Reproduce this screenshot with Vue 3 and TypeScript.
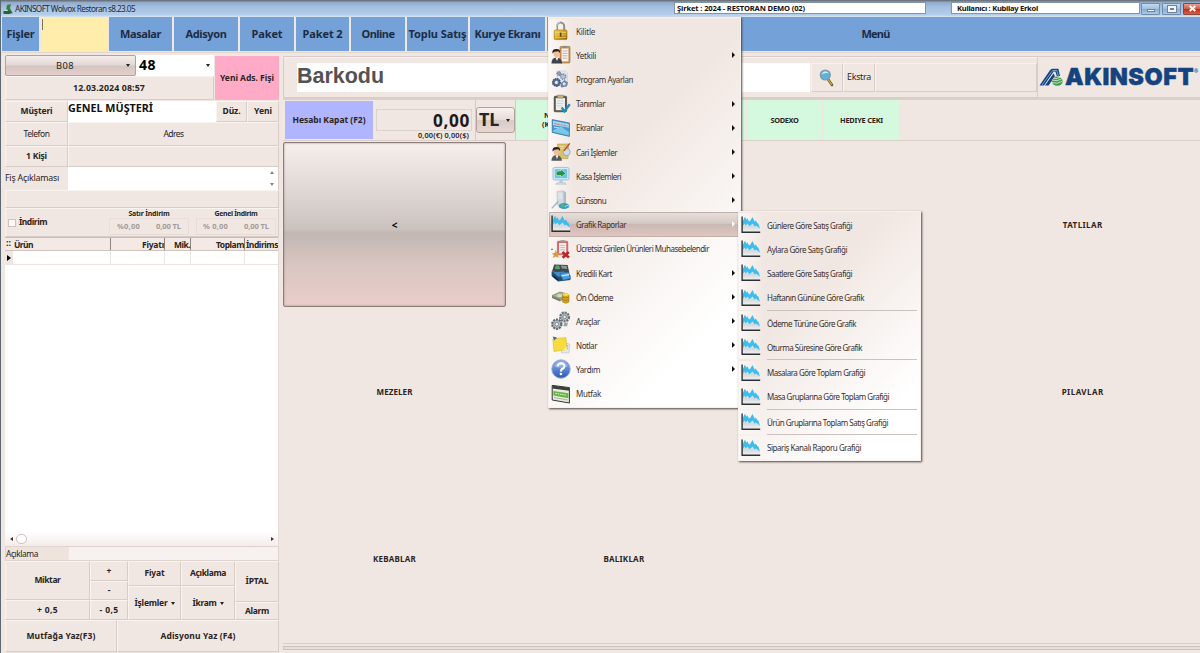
<script setup lang="ts">
interface MenuEntry {
  icon: string
  label: string
  width: number
  arrow?: boolean
  active?: boolean
}
interface ReportEntry {
  label: string
  width: number
  separator?: boolean
}

const navItems: { label: string; width: number; cls: string }[] = [
  { label: 'Fişler', width: 28, cls: 'n-fisler' },
  { label: '', width: 0, cls: 'n-input' },
  { label: 'Masalar', width: 41, cls: 'n-masalar' },
  { label: 'Adisyon', width: 41, cls: 'n-adisyon' },
  { label: 'Paket', width: 31, cls: 'n-paket' },
  { label: 'Paket 2', width: 40, cls: 'n-paket2' },
  { label: 'Online', width: 33, cls: 'n-online' },
  { label: 'Toplu Satış', width: 58, cls: 'n-toplu' },
  { label: 'Kurye Ekranı', width: 66, cls: 'n-kurye' },
  { label: 'Menü', width: 28, cls: 'n-menu' },
]

const menuItems: MenuEntry[] = [
  { icon: 'lock', label: 'Kilitle', width: 19 },
  { icon: 'user', label: 'Yetkili', width: 20, arrow: true },
  { icon: 'cogs', label: 'Program Ayarları', width: 57 },
  { icon: 'clip', label: 'Tanımlar', width: 29, arrow: true },
  { icon: 'screen', label: 'Ekranlar', width: 27, arrow: true },
  { icon: 'account', label: 'Cari İşlemler', width: 41, arrow: true },
  { icon: 'monitor', label: 'Kasa İşlemleri', width: 45, arrow: true },
  { icon: 'tower', label: 'Günsonu', width: 30, arrow: true },
  { icon: 'chart', label: 'Grafik Raporlar', width: 50, arrow: true, active: true },
  { icon: 'free', label: 'Ücretsiz Girilen Ürünleri Muhasebelendir', width: 133 },
  { icon: 'credit', label: 'Kredili Kart', width: 36, arrow: true },
  { icon: 'prepay', label: 'Ön Ödeme', width: 37, arrow: true },
  { icon: 'tools', label: 'Araçlar', width: 24, arrow: true },
  { icon: 'notes', label: 'Notlar', width: 21, arrow: true },
  { icon: 'help', label: 'Yardım', width: 24, arrow: true },
  { icon: 'kitchen', label: 'Mutfak', width: 25 },
]

const reports: ReportEntry[] = [
  { label: 'Günlere Göre Satış Grafiği', width: 85 },
  { label: 'Aylara Göre Satış Grafiği', width: 80 },
  { label: 'Saatlere Göre Satış Grafiği', width: 85 },
  { label: 'Haftanın Gününe Göre Grafik', width: 97, separator: true },
  { label: 'Ödeme Türüne Göre Grafik', width: 89 },
  { label: 'Oturma Süresine Göre Grafik', width: 95, separator: true },
  { label: 'Masalara Göre Toplam Grafiği', width: 98 },
  { label: 'Masa Gruplarına Göre Toplam Grafiği', width: 122, separator: true },
  { label: 'Ürün Gruplarına Toplam Satış Grafiği', width: 121, separator: true },
  { label: 'Sipariş Kanalı Raporu Grafiği', width: 94 },
]

const categories: { label: string; width: number }[] = [
  { label: '', width: 0 },
  { label: '', width: 0 },
  { label: 'TATLILAR', width: 40 },
  { label: 'MEZELER', width: 36 },
  { label: '', width: 0 },
  { label: '', width: 0 },
  { label: 'PILAVLAR', width: 42 },
  { label: 'KEBABLAR', width: 43 },
  { label: 'BALIKLAR', width: 41 },
  { label: '', width: 0 },
  { label: '', width: 0 },
]

/* Tracks a label so that it fills the given width in pixels. */
const vFit = {
  mounted(el: HTMLElement, binding: { value: number }) {
    const count = (el.textContent ?? '').length
    if (!count || !binding.value) return
    const natural = el.getBoundingClientRect().width
    el.style.letterSpacing = `${((binding.value - natural) / count).toFixed(3)}px`
  },
}
</script>

<template>
  <div class="window">
    <svg class="defs" width="0" height="0">
      <defs>
        <linearGradient id="gArea" x1="0" y1="0" x2="0" y2="1">
          <stop offset="0" stop-color="#dfe9ee" />
          <stop offset=".5" stop-color="#d3d9dc" />
          <stop offset="1" stop-color="#f1eeee" />
        </linearGradient>
        <linearGradient id="gGold" x1="0" y1="0" x2="1" y2="1">
          <stop offset="0" stop-color="#f7dc5c" />
          <stop offset=".5" stop-color="#d8a41c" />
          <stop offset="1" stop-color="#8d6408" />
        </linearGradient>
        <linearGradient id="gBlue" x1="0" y1="0" x2="0" y2="1">
          <stop offset="0" stop-color="#8fb4ec" />
          <stop offset="1" stop-color="#2c58b4" />
        </linearGradient>
        <symbol id="chartGlyph" viewBox="0 0 20 18">
          <path d="M1.6 8 4 6 8 8.4 12 7 15 10 18.8 12V15.4H1.6Z" fill="url(#gArea)" />
          <path d="M1.6 5.4 3 2.6 4 .8 5.4 3.8 6.4 2.2 8 5.4 9.4 4.6 11.4 1 12.6 3.2 13.6 5.8 14.8 4.6 16.4 7.2 17.4 7.6 18.9 12.4 16.6 10.8 15 9.6 13.6 10.6 11.6 7.4 10 9 8.2 10.2 6.6 7.6 4.6 9.4 3.4 7.4 1.6 10.4Z" fill="#3cbdee" />
          <path d="M1.1.4V16.2H19.2" fill="none" stroke="#2b3136" stroke-width="1.4" />
        </symbol>
      </defs>
    </svg>

    <header class="titlebar">
      <svg class="appicon" viewBox="0 0 10 10">
        <path d="M4 1 8 0 7 4 9 8H5L3 6Z" fill="#3c7f45" />
        <path d="M0 8 4 5 10 9 6 10H1Z" fill="#27613a" />
        <path d="M1 7 4 5 5 7Z" fill="#c9e6d2" />
      </svg>
      <span class="apptitle"><span v-fit="120" class="t">AKINSOFT Wolvox Restoran s8.23.05</span></span>
      <div class="field company"><span v-fit="128" class="t">Şirket : 2024 - RESTORAN DEMO (02)</span></div>
      <div class="field person"><span v-fit="81" class="t">Kullanıcı : Kubilay Erkol</span></div>
      <div class="winbtns">
        <i class="wb"><b class="min"></b></i>
        <i class="wb"><b class="max"></b></i>
        <i class="wb close"><svg viewBox="0 0 8 6"><path d="M1.5.8 6.5 5.2M6.5.8 1.5 5.2" stroke="#fff" stroke-width="1.7" /></svg></i>
      </div>
    </header>

    <nav class="nav">
      <div v-for="(n, i) in navItems" :key="i" :class="['navbtn', n.cls]">
        <span v-if="n.label" v-fit="n.width" class="t">{{ n.label }}</span>
        <i v-else class="caret"></i>
      </div>
    </nav>

    <main class="body">
      <aside class="left">
        <div class="top">
          <div class="topl">
            <div class="combos">
              <div class="combo"><span v-fit="18" class="t">B08</span><i class="dn"></i></div>
              <div class="number"><span v-fit="17" class="t">48</span><i class="dn"></i></div>
            </div>
            <div class="cell date"><span v-fit="72" class="t">12.03.2024 08:57</span></div>
          </div>
          <div class="newslip"><span v-fit="54" class="t">Yeni Ads. Fişi</span></div>
        </div>
        <div class="row customer">
          <div class="cell key"><span v-fit="32" class="t">Müşteri</span></div>
          <div class="input name"><span v-fit="85" class="t">GENEL MÜŞTERİ</span></div>
          <div class="cell edit"><span v-fit="18" class="t">Düz.</span></div>
          <div class="cell grow"><span v-fit="18" class="t">Yeni</span></div>
        </div>
        <div class="row phone">
          <div class="cell key"><span v-fit="26" class="t">Telefon</span></div>
          <div class="cell grow"><span v-fit="20" class="t">Adres</span></div>
        </div>
        <div class="row people">
          <div class="cell key"><span v-fit="21" class="t">1 Kişi</span></div>
          <div class="cell grow"></div>
        </div>
        <div class="row note">
          <div class="key plain"><span v-fit="54" class="t">Fiş Açıklaması</span></div>
          <div class="input grow spin"><i class="up"></i><i class="dw"></i></div>
        </div>
        <div class="cell spacer"></div>
        <div class="cell discount">
          <i class="check"></i>
          <span class="dlabel"><span v-fit="28" class="t">İndirim</span></span>
          <div class="dgroup g1">
            <div class="dhead"><span v-fit="41" class="t">Satır İndirim</span></div>
            <div class="dvals"><span v-fit="23" class="t">%0,00</span><span v-fit="25" class="t">0,00 TL</span></div>
          </div>
          <div class="dgroup g2">
            <div class="dhead"><span v-fit="43" class="t">Genel İndirim</span></div>
            <div class="dvals"><span v-fit="25" class="t">% 0,00</span><span v-fit="25" class="t">0,00 TL</span></div>
          </div>
        </div>
        <div class="table">
          <div class="thead">
            <span class="th c0"><i class="dots">::</i></span>
            <span class="th c1"><span v-fit="19" class="t">Ürün</span></span>
            <span class="th c2"><span v-fit="22" class="t">Fiyatı</span></span>
            <span class="th c3"><span v-fit="16" class="t">Mik.</span></span>
            <span class="th c4"><span v-fit="28" class="t">Toplam</span></span>
            <span class="th c5"><span v-fit="32" class="t">İndirims</span></span>
          </div>
          <div class="trow">
            <span class="td c0"><i class="ptr"></i></span>
            <span class="td c1"></span><span class="td c2"></span><span class="td c3"></span>
            <span class="td c4"></span><span class="td c5"></span>
          </div>
          <div class="hscroll"><i class="la"></i><i class="thumb"></i><i class="ra"></i></div>
        </div>
        <div class="desc"><div class="desckey"><span v-fit="32" class="t">Açıklama</span></div></div>
        <div class="pad">
          <div class="col w1">
            <div class="cell h37"><span v-fit="26" class="t">Miktar</span></div>
            <div class="cell grow"><span v-fit="21" class="t">+ 0,5</span></div>
          </div>
          <div class="col w2">
            <div class="cell h18"><span class="t">+</span></div>
            <div class="cell h18"><span class="t">-</span></div>
            <div class="cell grow"><span v-fit="19" class="t">- 0,5</span></div>
          </div>
          <div class="col w3">
            <div class="cell h23"><span v-fit="20" class="t">Fiyat</span></div>
            <div class="cell grow"><span v-fit="33" class="t">İşlemler</span><i class="dn"></i></div>
          </div>
          <div class="col w3 w4">
            <div class="cell h23"><span v-fit="36" class="t">Açıklama</span></div>
            <div class="cell grow"><span v-fit="24" class="t">İkram</span><i class="dn"></i></div>
          </div>
          <div class="col grow">
            <div class="cell h40"><span v-fit="23" class="t">İPTAL</span></div>
            <div class="cell grow"><span v-fit="24" class="t">Alarm</span></div>
          </div>
        </div>
        <div class="prints">
          <div class="cell p1"><span v-fit="69" class="t">Mutfağa Yaz(F3)</span></div>
          <div class="cell grow"><span v-fit="75" class="t">Adisyonu Yaz (F4)</span></div>
        </div>
      </aside>

      <section class="right">
        <div class="barrow">
          <div class="barframe">
            <div class="barcode"><span v-fit="87" class="t">Barkodu</span></div>
            <div class="cell search">
              <svg viewBox="0 0 16 18">
                <path d="M9.2 10.5 13 16" stroke="#6b5620" stroke-width="2.6" stroke-linecap="round" />
                <path d="M9.4 10.8 12.6 15.4" stroke="#d3ad48" stroke-width="1.2" stroke-linecap="round" />
                <circle cx="6.3" cy="6" r="5" fill="#5fb2dc" stroke="#8397a3" stroke-width="1.2" />
                <path d="M2.6 5.4A4 4 0 0 1 9.8 4.2Q6 3.6 2.6 5.4Z" fill="#d5f0fa" />
              </svg>
            </div>
            <div class="cell extra"><span v-fit="24" class="t">Ekstra</span></div>
            <div class="cell rest"></div>
          </div>
          <div class="logo">
            <svg class="mark" viewBox="0 0 24 18">
              <path d="M.5 17.5 11 2.2Q12 .8 14 .8H19.4L21 8H17.8L16.4 3.6H14.6L5 17.5Z" fill="#15427e" />
              <path d="M2.8 17.3 13.6 2.4H17.8L19.4 8" fill="none" stroke="#8bb8e4" stroke-width=".8" />
              <path d="M6 17.5 14.7 5.2 15.8 8.6 9.6 17.5Z" fill="#15427e" />
              <ellipse cx="18.3" cy="13.2" rx="5.4" ry="4.6" fill="#37a24f" />
              <path d="M12.8 12Q18 14.2 23.2 10.6M13 14.6Q18.5 16.6 23.6 13M14 10.2Q18 11.4 21.6 9" fill="none" stroke="#f1e7e2" stroke-width=".8" />
            </svg>
            <span v-fit="129" class="brand t">AKINSOFT</span><span class="reg">®</span>
          </div>
        </div>
        <div class="payrow">
          <div class="closebill"><span v-fit="73" class="t">Hesabı Kapat (F2)</span></div>
          <div class="total">
            <div class="sum"><span v-fit="37" class="t">0,00</span></div>
            <div class="fx"><span v-fit="51" class="t">0,00(€) 0,00($)</span></div>
          </div>
          <div class="currency"><div class="tl"><span v-fit="20" class="t">TL</span><i class="dn"></i></div></div>
          <div class="pay first"><span>N</span><span>(K</span></div>
          <div class="pay hidden"></div>
          <div class="pay"><span v-fit="28" class="t">SODEXO</span></div>
          <div class="pay last"><span v-fit="43" class="t">HEDIYE CEKI</span></div>
        </div>
        <div class="cats">
          <div class="back"><span class="t">&lt;</span></div>
          <div v-for="(c, i) in categories" :key="i" class="cat">
            <span v-if="c.label" v-fit="c.width" class="t">{{ c.label }}</span>
          </div>
        </div>
        <div class="bottombar"><i></i></div>
      </section>
    </main>

    <div class="menu main">
      <div v-for="m in menuItems" :key="m.label" :class="['item', { active: m.active }]">
        <svg class="ico" viewBox="0 0 20 20">
          <g v-if="m.icon === 'lock'">
            <path d="M6 10V5.6A3.6 4 0 0 1 13.2 5.6V10" fill="none" stroke="#8d9088" stroke-width="2" />
            <path d="M5.6 10V5.4A4 4.2 0 0 1 9 1.4" fill="none" stroke="#e1e3dc" stroke-width=".8" />
            <rect x="3.2" y="9" width="12.8" height="9.6" rx="1.2" fill="url(#gGold)" stroke="#94701a" stroke-width=".6" />
            <path d="M4 11.5H15M4 14H15M4 16.4H15" stroke="#f4dd7c" stroke-width=".6" />
            <path d="M9.6 11.6V15.8" stroke="#5c430c" stroke-width="1.5" />
          </g>
          <g v-else-if="m.icon === 'user'">
            <rect x="9" y="1.4" width="10" height="16.6" rx="1" fill="#cf9350" stroke="#9c6632" stroke-width=".6" />
            <path d="M10.6 3.4H17.4V16.4H10.6Z" fill="#f6f4f2" />
            <path d="M11.6 6H16.4M11.6 8.4H16.4M11.6 10.8H16.4M11.6 13.2H16.4" stroke="#c28a86" stroke-width=".7" />
            <path d="M11.6 1H16V3.2H11.6Z" fill="#8d8a88" />
            <path d="M.4 18.4Q.6 12.6 5.4 12.4 10.8 12.6 11.2 18.4Z" fill="#3b424c" />
            <path d="M4.4 12.4 6 16 7.4 12.4Z" fill="#fff" />
            <circle cx="5.8" cy="8.8" r="3.4" fill="#f0bf98" />
            <path d="M1.4 8.4Q.8 3.8 5.6 4 9.8 4.2 9 8L7.4 6.2 3.4 6.8Z" fill="#2a2320" />
          </g>
          <g v-else-if="m.icon === 'cogs'">
            <path d="M6 2H14.6L16.4 4V16H6Z" fill="#e3e7f0" stroke="#bfc5d3" stroke-width=".5" />
            <circle cx="7.8" cy="4.6" r="2" fill="#8c9cb8" stroke="#647693" stroke-dasharray="1 .7" />
            <circle cx="12.2" cy="7.6" r="2.6" fill="#b4c0d4" stroke="#6b7e9e" stroke-width="1.3" stroke-dasharray="1.2 .8" />
            <circle cx="5.4" cy="13.4" r="3.7" fill="#5f7494" stroke="#3f5578" stroke-width="1.6" stroke-dasharray="1.6 .6" />
            <circle cx="5.4" cy="13.4" r="1.6" fill="#e4e9f1" />
            <path d="M9.4 14.4 13.6 11 17 13.6 15.8 17.6 10 18.6Z" fill="#6f86a5" />
            <circle cx="13.2" cy="14.8" r="1.6" fill="#dae5ef" />
          </g>
          <g v-else-if="m.icon === 'clip'">
            <rect x="3.2" y="2.2" width="12.4" height="15.6" rx="1" fill="#5d5547" stroke="#37332c" stroke-width=".6" />
            <path d="M4.8 4H14V16.2H4.8Z" fill="#eef0f0" />
            <path d="M6.4 1.2H12.4V4.2H6.4Z" fill="#c3b183" stroke="#857348" stroke-width=".5" />
            <path d="M6 7H12.6M6 9.4H12.6M6 11.8H11" stroke="#bfc5c8" stroke-width=".7" />
            <path d="M10.6 13.6 13.4 17.2 18.8 10.2" fill="none" stroke="#238fb3" stroke-width="2.4" />
          </g>
          <g v-else-if="m.icon === 'screen'">
            <path d="M1.2 1.6 18.4 5V18.4L1.2 14.4Z" fill="#429ed2" stroke="#2a6f9d" stroke-width=".7" />
            <path d="M2 2.8 17.8 6V9.8L2 7Z" fill="#a9d6ee" />
            <path d="M3.2 5.4 16.4 8.2" stroke="#dc7e86" stroke-width="1.2" stroke-dasharray="2.4 .8" />
            <path d="M2 12.4 10 8.4 17.8 14 17.8 17.4 2 13.8Z" fill="#7cc4e8" />
            <path d="M3 9 8 10" stroke="#e6f4fa" stroke-width=".8" />
          </g>
          <g v-else-if="m.icon === 'account'">
            <path d="M6.4 2H17.6L17 16.6H8Z" fill="#d9c368" stroke="#aa9136" stroke-width=".5" />
            <path d="M8.6 4.4H13M9.6 6.6H13" stroke="#efe2a0" stroke-width=".9" />
            <circle cx="15.6" cy="10" r="3.6" fill="#c8dfeb" stroke="#7f9cae" stroke-width=".7" />
            <path d="M13 8.8 18.8 1.4" stroke="#cf3b33" stroke-width="1.3" />
            <path d="M.4 18.8Q.6 13.4 5.2 13 10.6 13.4 11 18.8Z" fill="#59585a" />
            <path d="M4.6 13.2 6 17 7.4 13.2Z" fill="#fff" />
            <circle cx="5.8" cy="9.8" r="3.3" fill="#f0bf98" />
            <path d="M1.6 9.4Q.8 5 5.6 5 9.8 5.2 9 9L7.4 7.2 3.6 7.8Z" fill="#2a2320" />
          </g>
          <g v-else-if="m.icon === 'monitor'">
            <rect x="2" y="1.4" width="16" height="12.6" rx="1.6" fill="#d5ebf5" stroke="#7fb0cd" stroke-width=".7" />
            <rect x="3.8" y="3.2" width="12.4" height="9" fill="#6cc3e4" />
            <path d="M5 7.8Q5.4 4.6 10 4.8V3.4L15 7.4 10 11.2V9.6H5.6Z" fill="#23934a" stroke="#d8f3df" stroke-width=".6" />
            <path d="M8.4 14H11.8V16.6H8.4Z" fill="#b9cdd9" />
            <path d="M4.6 18.2Q5 16.4 10 16.4T15.4 18.2Z" fill="#d6dfe6" stroke="#9fb3c0" stroke-width=".5" />
          </g>
          <g v-else-if="m.icon === 'tower'">
            <path d="M6 1.4 12.6.8 13 15H6.4Z" fill="#d3dbe0" stroke="#a9b6bf" stroke-width=".5" />
            <path d="M12.6.8 15 2.4V14.6L13 15Z" fill="#aebbc5" />
            <path d="M7.4 4H11.4M7.4 6H11.4M7.4 8H11.4" stroke="#f1f5f7" stroke-width=".8" />
            <path d="M.8 18.4 7.4 11.2" stroke="#9fb4c3" stroke-width="1.4" />
            <ellipse cx="13" cy="16" rx="5.4" ry="3" fill="#3c9cc4" />
            <path d="M9.4 15.2Q12 13.4 14 15 14 17.4 10.6 17.6Z" fill="#57b575" />
            <path d="M14 17Q16 14 18 16" stroke="#c2e8f2" stroke-width=".8" fill="none" />
          </g>
          <use v-else-if="m.icon === 'chart'" href="#chartGlyph" x="0" y="1" width="20" height="18" />
          <g v-else-if="m.icon === 'free'">
            <rect x="6.4" y="2.2" width="10.4" height="13.6" rx="1" fill="#d9686b" stroke="#b5444a" stroke-width=".5" />
            <path d="M8 4H15.2V14.4H8Z" fill="#f5eeee" />
            <path d="M9.4 1.2H14V3.4H9.4Z" fill="#9a9698" />
            <path d="M9.2 6.4H14M9.2 8.6H14M9.2 10.8H14" stroke="#aab2bd" stroke-width=".8" />
            <path d="M4.6 11 6 14 9 14.2 6.8 16.2 7.6 19 4.8 17.4 2 19 2.8 16 .8 14.2 3.6 14Z" fill="#d39c3c" />
            <path d="M0 10.4H2" stroke="#7e8a63" stroke-width="1.4" />
            <path d="M11.4 13 18 18.6M17.8 13 11.6 18.8" stroke="#bb2726" stroke-width="2.6" />
          </g>
          <g v-else-if="m.icon === 'credit'">
            <path d="M3.2 1.4 16.6 2 18.4 10 1 8.6Z" fill="#41484b" />
            <path d="M4.6 2.6 8.2 2.4 9 6.2 4 6Z" fill="#57a46c" />
            <path d="M10 2.6 15.6 3 16.2 6 10.8 5.6Z" fill="#89979a" />
            <path d="M.6 8.4 14 7.8 19.4 12.4V17L7 18.4.6 13Z" fill="#1f4f75" />
            <path d="M2 9.2 13 8.4 18 12.4 7.4 13.8Z" fill="#4a8cc4" />
            <path d="M9 10.4 17.4 9.2 19.6 15.4 12 17.2Z" fill="#4d9fe0" stroke="#225e98" stroke-width=".6" />
            <path d="M10.6 12.8 18 11.6" stroke="#d2ebfa" stroke-width="1.2" />
            <path d="M2 13 7 17" stroke="#0f2233" stroke-width="1.4" />
          </g>
          <g v-else-if="m.icon === 'prepay'">
            <path d="M1 8.6 9 5 16.6 7 9 12Z" fill="#aab394" stroke="#6e785e" stroke-width=".6" />
            <path d="M1 8.8 9 12V14.4L1 11Z" fill="#76806a" />
            <path d="M9 12 16 8V10.6L9 14.4Z" fill="#939c80" />
            <ellipse cx="8.6" cy="8.6" rx="2.8" ry="1.5" fill="#d4dac1" />
            <path d="M11.6 7.6H18V15Q15 17.6 11.6 15Z" fill="#d8a41c" stroke="#94701a" stroke-width=".5" />
            <ellipse cx="14.8" cy="7.6" rx="3.2" ry="1.4" fill="#f7dc5c" />
            <path d="M11.8 10Q15 12 18 10M11.8 12.6Q15 14.6 18 12.6" fill="none" stroke="#8d6408" stroke-width=".6" />
          </g>
          <g v-else-if="m.icon === 'tools'">
            <circle cx="13.6" cy="6" r="4.4" fill="#aeb8bc" stroke="#67747a" stroke-width="2.2" stroke-dasharray="2 .9" />
            <circle cx="13.6" cy="6" r="1.7" fill="#f3efec" stroke="#5f6b70" stroke-width=".7" />
            <circle cx="5.8" cy="13.2" r="4.6" fill="#b3bdc2" stroke="#5d696f" stroke-width="2.2" stroke-dasharray="2 .9" />
            <circle cx="5.8" cy="13.2" r="1.8" fill="#f3efec" stroke="#5f6b70" stroke-width=".7" />
            <path d="M13 12 17 11.4 16 15.6 12.4 15Z" fill="#98a4aa" />
          </g>
          <g v-else-if="m.icon === 'notes'">
            <path d="M11 7 18.6 9 18 17.8 10.4 18Z" fill="#e5e7ea" stroke="#aeb4bb" stroke-width=".5" />
            <path d="M14.6 11H17M14.6 13.2H17" stroke="#7f9ac0" stroke-width=".9" />
            <path d="M1.8 3.8 15 2.6 15.8 14.4 3 16.6Z" fill="#f6dc3e" stroke="#cdae1c" stroke-width=".5" />
            <path d="M9.4 15.4Q13.4 15.2 15.8 11V14.4Z" fill="#fff4a0" />
            <path d="M1.6 1.6 6 2.6 3.4 5.4Z" fill="#3467b4" />
          </g>
          <g v-else-if="m.icon === 'help'">
            <circle cx="10" cy="10" r="9.2" fill="url(#gBlue)" stroke="#8fa5cf" stroke-width=".9" />
            <path d="M3 7.6A7.6 7.6 0 0 1 17 7.6Q10 10 3 7.6Z" fill="#bcd2f4" opacity=".45" />
            <path d="M6.6 7.4Q7.2 4.4 10.2 4.4 13.6 4.6 13.4 7.4 13.2 9.2 11 10 10 10.6 10 12.4" fill="none" stroke="#fff" stroke-width="2.1" />
            <circle cx="9.9" cy="15" r="1.3" fill="#fff" />
          </g>
          <g v-else>
            <path d="M1.2 1.4 18.4 3.6V19L1.2 16Z" fill="#e8ecdf" stroke="#31352f" stroke-width="1" />
            <path d="M1.4 1.6 18.2 3.8V6.8L1.4 4.4Z" fill="#3a3f39" />
            <path d="M2.4 7 17.4 9.2V14.2L2.4 11.6Z" fill="#67b543" />
            <path d="M4.4 9.4 15.6 11.2" stroke="#dcf3c9" stroke-width="1" stroke-dasharray="1.6 .7" />
            <path d="M3 13.6 16.8 16" stroke="#9aa39a" stroke-width=".8" />
          </g>
        </svg>
        <span class="lbl"><span v-fit="m.width" class="t">{{ m.label }}</span></span>
        <i v-if="m.arrow" class="rt"></i>
      </div>
    </div>

    <div class="menu sub">
      <template v-for="r in reports" :key="r.label">
        <div class="item">
          <svg class="ico" viewBox="0 0 20 20"><use href="#chartGlyph" x="0" y="1" width="20" height="18" /></svg>
          <span class="lbl"><span v-fit="r.width" class="t">{{ r.label }}</span></span>
        </div>
        <div v-if="r.separator" class="sep"></div>
      </template>
    </div>
  </div>
</template>

<style>
html,
body {
  margin: 0;
  overflow: hidden;
}
</style>

<style scoped>
* {
  box-sizing: border-box;
}
.window {
  position: relative;
  width: 1200px;
  height: 653px;
  overflow: hidden;
  background: #f1e7e2;
  color: #2a2423;
  font: 700 8.5px/1.2 'Noto Sans', sans-serif;
  display: flex;
  flex-direction: column;
  border-left: 1px solid #5e6873;
}
.t {
  display: inline-block;
  white-space: nowrap;
}
.defs {
  position: absolute;
}
.grow {
  flex: 1;
}
i {
  font-style: normal;
}

/* title bar */
.titlebar {
  flex: 0 0 17px;
  display: flex;
  align-items: center;
  background: linear-gradient(#6c7480 0 1px, #8fa9c8 2px, #a3c0e1 7px, #b4cfeb 15px, #dbe6f1);
}
.appicon {
  width: 10px;
  height: 10px;
  margin: 1px 2px 0 2px;
  flex: none;
}
.apptitle {
  width: 659px;
  flex: none;
  font: 400 8.2px/14px 'Noto Sans', sans-serif;
  color: #1c2a3a;
}
.field {
  height: 12px;
  flex: none;
  margin-top: -1px;
  background: #fff;
  border: 1px solid #8495a8;
  font-size: 7.6px;
  line-height: 10px;
  color: #111;
}
.company {
  width: 252px;
  padding-left: 2px;
  margin-right: 25px;
}
.person {
  width: 189px;
  padding-left: 5px;
  margin-right: 1px;
}
.winbtns {
  display: flex;
  flex: none;
  gap: 2px;
}
.wb {
  width: 19px;
  height: 12px;
  border: 1px solid #6f8cab;
  border-radius: 1px;
  background: linear-gradient(#c5daf0, #9dbddd 50%, #89add2 51%, #a6c8e8);
  display: flex;
  align-items: center;
  justify-content: center;
}
.min {
  width: 8px;
  height: 3px;
  margin-top: 4px;
  background: #f2f5f8;
  border: 1px solid #71839a;
}
.max {
  width: 8px;
  height: 6px;
  background: #71839a;
  border: 2px solid #f2f5f8;
  outline: 0.5px solid #71839a;
}
.close {
  background: linear-gradient(#e5a093, #cf5a45 50%, #b9301c 51%, #d0604a);
  border-color: #8c463c;
}
.close svg {
  width: 9px;
  height: 7px;
}

/* navigation */
.nav {
  flex: 0 0 36px;
  display: flex;
  padding-left: 1px;
  border-bottom: 1px solid #e3d6d1;
}
.navbtn {
  height: 34px;
  margin-right: 2px;
  background: #75a1d9;
  display: flex;
  align-items: center;
  justify-content: center;
  font-size: 11px;
  color: #1d2c42;
}
.n-fisler { width: 37px; }
.n-input { width: 66px; background: #ffedab; justify-content: flex-start; align-items: flex-start; }
.n-masalar { width: 63px; }
.n-adisyon { width: 64px; }
.n-paket { width: 54px; }
.n-paket2 { width: 53px; }
.n-online { width: 54px; }
.n-toplu { width: 61px; }
.n-kurye { width: 75px; }
.n-menu { flex: 1; margin: 0; padding-left: 4px; }
.caret {
  width: 1px;
  height: 11px;
  margin: 2px 1px;
  background: #7a735e;
}

.body {
  flex: 1;
  display: flex;
  min-height: 0;
}
.cell {
  display: flex;
  align-items: center;
  justify-content: center;
  border: 1px solid #d9ccc7;
  border-top-color: #faf4f1;
  border-left-color: #faf4f1;
}
.input {
  background: #fff;
}
.dn {
  border: 2.5px solid transparent;
  border-top: 3px solid #222;
  border-bottom: 0;
}

/* left column */
.left {
  width: 274px;
  margin: 2px 4px 0;
  display: flex;
  flex-direction: column;
}
.top {
  height: 46px;
  display: flex;
  gap: 1px;
  padding-bottom: 1px;
}
.topl {
  width: 209px;
  display: flex;
  flex-direction: column;
}
.combos {
  display: flex;
  height: 21px;
}
.combo {
  width: 131px;
  border: 1px solid #b3a29c;
  border-radius: 2px;
  background: linear-gradient(#f5eeeb, #e2d7d3 48%, #d2c6c2 52%, #e4cfca);
  display: flex;
  align-items: center;
  justify-content: space-between;
  padding: 0 5px 0 50px;
  font-size: 9.4px;
  font-weight: 400;
}
.number {
  flex: 1;
  background: #fff;
  display: flex;
  align-items: center;
  justify-content: space-between;
  padding: 0 4px 0 3px;
  font-size: 14px;
  color: #000;
}
.date {
  flex: 1;
  font-size: 8.8px;
  padding-right: 1px;
}
.newslip {
  flex: 1;
  margin-top: 1px;
  background: #ffabc8;
  display: flex;
  align-items: center;
  justify-content: center;
}
.row {
  display: flex;
}
.key {
  width: 63px;
}
.customer {
  height: 21px;
}
.name {
  width: 148px;
  font-size: 10.8px;
  line-height: 14px;
  color: #111;
}
.edit {
  width: 31px;
}
.phone {
  height: 24px;
  font-weight: 400;
}
.people {
  height: 21px;
}
.note {
  height: 23px;
  font-weight: 400;
}
.plain {
  line-height: 23px;
  font-size: 8.8px;
}
.spin {
  display: flex;
  flex-direction: column;
  justify-content: space-between;
  align-items: flex-end;
  padding: 4px 4px;
  border-right: 1px solid #d9ccc7;
}
.up,
.dw {
  border: 2.5px solid transparent;
}
.up {
  border-bottom: 3px solid #8b8380;
  border-top: 0;
}
.dw {
  border-top: 3px solid #8b8380;
  border-bottom: 0;
}
.spacer {
  height: 18px;
}
.discount {
  height: 29px;
  justify-content: flex-start;
}
.check {
  width: 8px;
  height: 8px;
  margin-left: 2px;
  border: 1px solid #cfc2bd;
  background: #fbf8f6;
}
.dlabel {
  width: 93px;
  padding-left: 3px;
}
.dgroup {
  height: 27px;
  width: 80px;
  font-size: 6.9px;
}
.g2 {
  margin-left: 7px;
}
.dhead {
  text-align: center;
  line-height: 9px;
}
.dvals {
  height: 17px;
  display: flex;
  align-items: center;
  justify-content: space-between;
  padding: 0 7px;
  border: 1px solid #e8ddd8;
  color: #a49a97;
  font-size: 7.6px;
}
.g2 .dvals {
  padding: 0 6px;
}
.table {
  height: 309px;
  background: #fff;
  display: flex;
  flex-direction: column;
  border-right: 1px solid #e6dcd7;
}
.thead {
  height: 14px;
  display: flex;
  background: #f3eae6;
  border-top: 1px solid #c9bcb7;
  border-bottom: 1px solid #cfc3be;
  overflow: hidden;
}
.th {
  line-height: 13px;
  text-align: right;
  border-right: 1px solid #8e8380;
}
.td {
  border-right: 1px solid #ece5e2;
}
.c0 { width: 8px; }
.th.c0 { border: 0; }
.c1 { width: 98px; }
.th.c1 { text-align: left; padding-left: 1px; }
.c2 { width: 54px; }
.c3 { width: 26px; }
.c4 { width: 54px; }
.c5 { flex: 1; border-right: 0; }
.th.c5 { text-align: left; padding-left: 1px; }
.dots {
  font-size: 9px;
  line-height: 10px;
  display: block;
  text-align: left;
  padding-left: 1px;
}
.trow {
  height: 14px;
  display: flex;
  border-bottom: 1px solid #ece5e2;
}
.td.c0 {
  background: #f1e7e2;
  display: flex;
  align-items: center;
  padding-left: 2px;
}
.ptr {
  border: 3.5px solid transparent;
  border-left: 4px solid #000;
  border-right: 0;
}
.hscroll {
  margin-top: auto;
  height: 15px;
  display: flex;
  align-items: center;
  padding: 0 4px 0 5px;
  background: linear-gradient(#fff, #f4ecea);
}
.la,
.ra {
  border: 2.5px solid transparent;
}
.la {
  border-right: 3px solid #3b3432;
  border-left: 0;
}
.ra {
  border-left: 3px solid #3b3432;
  border-right: 0;
  margin-left: auto;
}
.thumb {
  width: 11px;
  height: 10px;
  margin-left: 3px;
  border: 1px solid #cdc1bc;
  border-radius: 5px;
  background: #fff;
}
.desc {
  height: 15px;
  background: #f7f2ef;
  border: 1px solid #dfd3ce;
}
.desckey {
  width: 63px;
  height: 13px;
  background: #efe3de;
  font-weight: 400;
  font-size: 8.4px;
  line-height: 13px;
}
.pad {
  height: 59px;
  display: flex;
}
.col {
  display: flex;
  flex-direction: column;
}
.w1 { width: 85px; }
.w2 { width: 38px; }
.w3 { width: 53px; }
.w4 { width: 54px; }
.h37 { height: 39px; }
.h18 { height: 19.5px; }
.h23 { height: 25px; }
.h40 { height: 41px; }
.pad .dn {
  margin-left: 3px;
}
.prints {
  flex: 1;
  display: flex;
  padding-bottom: 1px;
}
.p1 {
  width: 112px;
}

/* right side */
.right {
  flex: 1;
  min-width: 0;
  display: flex;
  flex-direction: column;
  padding-top: 3px;
}
.barrow {
  height: 44px;
  display: flex;
  border-top: 1px solid #d8cbc6;
  border-bottom: 3px solid #dccfca;
}
.barframe {
  width: 755px;
  height: 41px;
  padding: 5px 0 5px 13px;
  display: flex;
  border: 1px solid #d9ccc7;
  border-top-color: #f8f2ef;
  border-left-color: #d9ccc7;
}
.barcode {
  width: 513px;
  background: #fff;
  font: 700 21.5px/27px 'Liberation Sans', Arial, sans-serif;
  color: #555253;
}
.search {
  width: 32px;
  margin-left: 1px;
}
.search svg {
  width: 16px;
  height: 18px;
}
.extra {
  width: 32px;
  font-weight: 400;
  font-size: 8.8px;
}
.rest {
  flex: 1;
}
.logo {
  display: flex;
  align-items: center;
  padding-left: 1px;
  white-space: nowrap;
}
.mark {
  width: 24px;
  height: 18px;
}
.brand {
  font: 900 23.5px/24px Inter, 'Open Sans', sans-serif;
  color: #14437f;
  margin-left: 2px;
  -webkit-text-stroke: 0.4px #14437f;
}
.reg {
  font: 700 5px/18px 'Noto Sans', sans-serif;
  align-self: flex-start;
  margin-top: 5px;
  color: #14437f;
}
.payrow {
  height: 41px;
  display: flex;
  border-bottom: 1px solid #ddd0cb;
  padding-left: 2px;
}
.closebill {
  width: 88px;
  height: 38px;
  margin-top: 1px;
  background: #b0b5fd;
  display: flex;
  align-items: center;
  justify-content: center;
}
.total {
  width: 103px;
  padding: 9px 3px 0 3px;
  border-right: 1px solid #d6c9c4;
}
.sum {
  height: 22px;
  border: 1px solid #ded2cd;
  text-align: right;
  padding-right: 1px;
  font-size: 17.2px;
  line-height: 21px;
  color: #1e191a;
}
.fx {
  text-align: right;
  padding-right: 3px;
  font-size: 7.4px;
  line-height: 9px;
  font-weight: 600;
}
.currency {
  width: 40px;
  padding: 7px 0 0 0;
  border-right: 1px solid #d6c9c4;
}
.tl {
  height: 26px;
  border: 1px solid #b3a29c;
  border-radius: 3px;
  background: linear-gradient(#f7f1ee, #e6dcd8 50%, #d8ccc8 52%, #e8d6d1);
  display: flex;
  align-items: center;
  justify-content: space-between;
  padding: 0 4px 0 2px;
  font-size: 18px;
}
.pay {
  width: 75px;
  height: 40px;
  margin-right: 2px;
  background: #d4f9de;
  display: flex;
  align-items: center;
  justify-content: center;
  font-size: 7.4px;
}
.first {
  flex-direction: column;
  align-items: flex-start;
  padding-left: 26px;
}
.first span:first-child {
  padding-left: 2px;
}
.hidden {
  width: 152px;
}
.last {
  margin: 0;
}
.cats {
  display: grid;
  grid-template-columns: repeat(4, 223px);
  grid-template-rows: repeat(3, 165px);
  gap: 2.4px 6.4px;
  margin-top: 1px;
  font-size: 8px;
}
.cat {
  display: flex;
  align-items: center;
  justify-content: center;
}
.back {
  display: flex;
  align-items: center;
  justify-content: center;
  font-size: 10px;
  color: #000;
  border: 1px solid #8d7f7b;
  border-radius: 2px;
  box-shadow: inset 0 0 2px #8d7f7b;
  background: linear-gradient(#f6efec, #ddd5d2 32%, #cac2be 53%, #c2b7b3 55%, #d9c6c2 75%, #e9cdc9);
}
.bottombar {
  margin-top: auto;
  height: 10px;
  padding-top: 2px;
  border-top: 1px solid #d8cdc8;
}
.bottombar i {
  display: block;
  height: 4px;
  background: #e6ddd8;
  border: 1px solid #cfc3be;
  border-right: 0;
}

/* popup menus */
.menu {
  position: absolute;
  background: linear-gradient(135deg, #f1e7e2 35%, #fff 82%);
  border: 1px solid #f7f1ee;
  box-shadow: 1px 1px 2px #4d4644;
  font: 400 8px/1.2 'Noto Sans', sans-serif;
  color: #38302e;
}
.main {
  left: 547px;
  top: 17px;
  width: 193px;
  height: 391px;
  padding-top: 1px;
}
.sub {
  left: 737px;
  top: 211px;
  width: 183px;
  height: 250px;
  padding-top: 1px;
}
.item {
  height: 24.18px;
  display: flex;
  align-items: center;
  padding-left: 2px;
  background: linear-gradient(90deg, #fbf7f5, transparent 24px);
}
.main .item {
  padding-right: 5px;
}
.main .active {
  background: linear-gradient(#e9e0dc, #d4c9c5 45%, #c9b8b4 50%, #e3c6c1);
  box-shadow: inset 0 0 0 1px #bfb0ab;
}
.ico {
  width: 20px;
  height: 20px;
  flex: none;
}
.lbl {
  margin-left: 5px;
  padding-top: 1px;
}
.sub .lbl {
  margin-left: 6px;
}
.rt {
  margin-left: auto;
  border: 3px solid transparent;
  border-left: 3.5px solid #111;
  border-right: 0;
}
.active .rt {
  border-left-color: #fff;
}
.sep {
  height: 1px;
  margin: 0 3px 0.25px 28px;
  background: #cbc2be;
}
</style>
